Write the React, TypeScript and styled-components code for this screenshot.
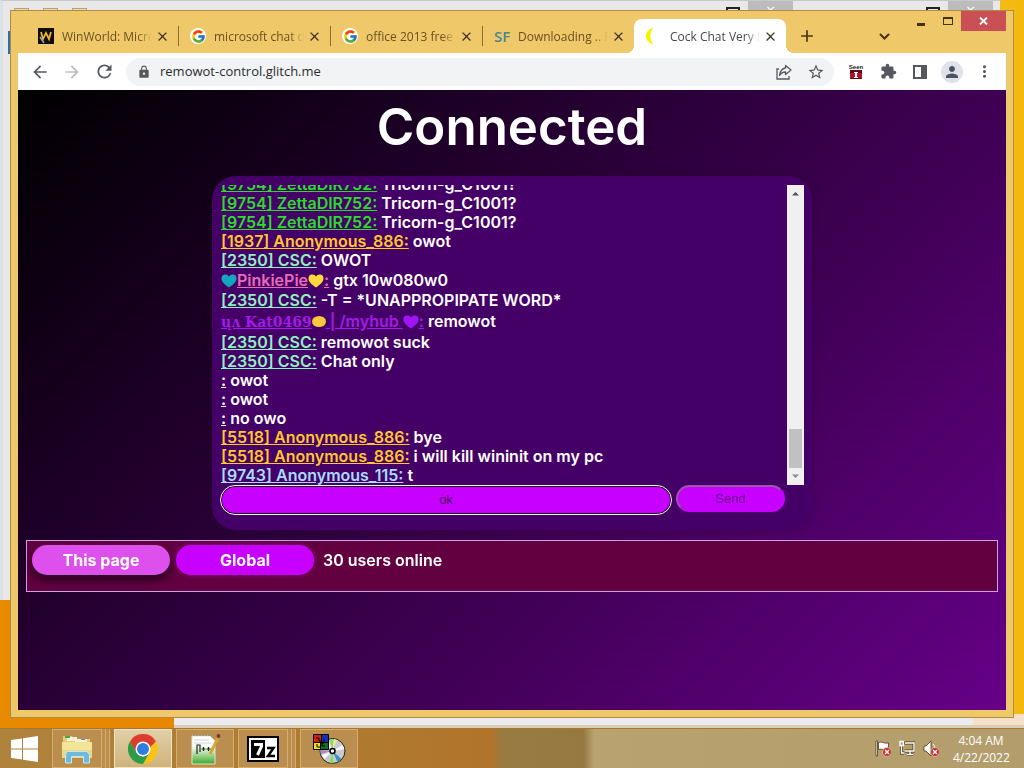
import React from "react";
import styled, { createGlobalStyle, css } from "styled-components";
import {
  MdArrowBack,
  MdArrowForward,
  MdRefresh,
  MdLock,
  MdStarBorder,
  MdExtension,
  MdPerson,
  MdMoreVert,
  MdClose,
  MdAdd,
} from "react-icons/md";
import { FcGoogle } from "react-icons/fc";

const GlobalStyle = createGlobalStyle`
  * { box-sizing: border-box; }
  body { margin: 0; font-family: "Open Sans", "Noto Sans", sans-serif; }
  button { font: inherit; color: inherit; border: 0; padding: 0; background: none; }
`;

const Desktop = styled.div`
  position: relative;
  min-height: 100vh;
  display: flex;
  flex-direction: column;
  overflow: hidden;
  background: linear-gradient(90deg, #e88a00 0, #e58500 40%, #f4bd1c 96%, #f4b90e 100%);
`;

/* Inactive windows that peek out from behind the browser */
const BackWindow = styled.div`
  position: absolute;
  top: 0;
  left: 0;
  right: 24px;
  height: 600px;
  border-top: 1px solid #c9c9c9;
  border-left: 3px solid #dce3e8;
  background: #e9e8e9;
`;
const LowerWindow = styled.div`
  position: absolute;
  left: 174px;
  right: 0;
  bottom: 40px;
  height: 14px;
  border-bottom: 3px solid #d9cdb8;
  background: linear-gradient(90deg, #ebebef 0 94%, #f5e0ca 94%);
`;
const BlueEdge = styled.div`
  position: absolute;
  left: 8px;
  top: 31px;
  width: 3px;
  height: 23px;
  background: #2a70a8;
`;
const BackIcons = styled.div`
  position: absolute;
  top: 8px;
  left: 14px;
  display: flex;
  gap: 14px;
  span {
    width: 15px;
    height: 4px;
    border: 1px solid #b5a27c;
    background: #e9dcae;
  }
`;
const BackControls = styled.div<{ $right: number }>`
  position: absolute;
  top: 1px;
  right: ${(p) => p.$right}px;
  display: flex;
  gap: 8px;
  height: 12px;
  &::before {
    content: "";
    width: 10px;
    height: 8px;
    margin-top: 6px;
    border: 2px solid #222;
  }
`;
const BackClose = styled.span`
  width: 45px;
  padding-top: 3px;
  background: #bcbcbc;
  color: #fff;
  text-align: center;
  line-height: 12px;
`;

const Browser = styled.section`
  position: relative;
  flex: 1;
  display: flex;
  flex-direction: column;
  margin: 10px;
  padding: 0 7px 7px;
  border: 1px solid #ae8c48;
  background: #efc869;
`;
const TitleBar = styled.header`
  display: flex;
  height: 42px;
  padding-left: 8px;
`;
const Tabs = styled.nav`
  display: flex;
  align-items: flex-end;
`;
const Tab = styled.div<{ $active?: boolean; $line?: boolean }>`
  position: relative;
  display: flex;
  align-items: center;
  width: 152px;
  height: 34px;
  padding: 0 8px 0 12px;
  color: #6b4f22;
  font-size: 12px;
  ${(p) =>
    p.$line &&
    css`
      &::after {
        content: "";
        position: absolute;
        right: -1px;
        top: 7px;
        height: 20px;
        border-right: 1px solid #8e7136;
      }
    `}
  ${(p) =>
    p.$active &&
    css`
      color: #45484c;
      background: #fff;
      border-radius: 8px 8px 0 0;
      &::before,
      &::after {
        content: "";
        position: absolute;
        bottom: 0;
        width: 8px;
        height: 8px;
      }
      &::before {
        left: -8px;
        background: radial-gradient(circle at 0 0, transparent 8px, #fff 8px);
      }
      &::after {
        right: -8px;
        background: radial-gradient(circle at 100% 0, transparent 8px, #fff 8px);
      }
    `}
`;
const Favicon = styled.span<{ $round?: boolean }>`
  display: grid;
  place-items: center;
  flex: none;
  width: 16px;
  height: 16px;
  border-radius: ${(p) => (p.$round ? "50%" : "0")};
  background: ${(p) => (p.$round ? "#fff" : "transparent")};
  color: #4b8796;
  font-weight: 600;
  font-size: 15px;
  line-height: 16px;
`;
const TabTitle = styled.span`
  flex: 1;
  margin: 0 2px 0 8px;
  overflow: hidden;
  white-space: nowrap;
  mask-image: linear-gradient(90deg, #000 84%, transparent);
`;
const TabClose = styled.button`
  display: grid;
  place-items: center;
  flex: none;
  width: 16px;
  height: 16px;
  color: #3c3122;
`;
const NewTab = styled.button`
  display: grid;
  place-items: center;
  width: 28px;
  height: 28px;
  margin: 11px 0 0 7px;
  color: #4b3512;
`;
const WindowControls = styled.div`
  display: flex;
  align-items: flex-start;
  margin-left: auto;
`;
const ControlButton = styled.button<{ $kind: "search" | "plain" | "close" }>`
  display: grid;
  place-items: center;
  width: ${(p) => (p.$kind === "close" ? 45 : 27)}px;
  height: 20px;
  ${(p) => p.$kind === "search" && "margin: 15px 9px 0 0;"}
  color: ${(p) => (p.$kind === "close" ? "#fff" : "#4a2f10")};
  background: ${(p) => (p.$kind === "close" ? "#c95156" : "transparent")};
`;

const Toolbar = styled.div`
  display: flex;
  align-items: center;
  height: 37px;
  padding: 0 6px;
  background: #fff;
  color: #55595e;
`;
const ToolButton = styled.button<{ $faint?: boolean }>`
  display: grid;
  place-items: center;
  width: 32px;
  height: 28px;
  opacity: ${(p) => (p.$faint ? 0.4 : 1)};
`;
const Omnibox = styled.div`
  flex: 1;
  display: flex;
  align-items: center;
  height: 28px;
  margin: 0 6px;
  padding: 0 2px 0 11px;
  border-radius: 14px;
  background: #f1f3f4;
`;
const Address = styled.input`
  flex: 1;
  min-width: 0;
  padding: 0 0 2px 9px;
  border: 0;
  outline: 0;
  background: none;
  color: #2b2e31;
  font: 13px/20px "Open Sans", "Noto Sans", sans-serif;
`;
const Avatar = styled.span`
  display: grid;
  place-items: center;
  width: 22px;
  height: 22px;
  border-radius: 50%;
  background: #dfe2e9;
  color: #4c5366;
`;

const Page = styled.main`
  flex: 1;
  padding: 7px 8px 0;
  background: linear-gradient(135deg, #000 0%, #660088 100%);
  color: #fff;
  font-family: Inter, "Open Sans", sans-serif;
  font-weight: 600;
  font-size: 16px;
`;
const Title = styled.h1`
  margin: 0 0 19px;
  font-size: 51px;
  line-height: 60px;
  font-weight: 600;
  text-align: center;
`;
const Card = styled.section`
  max-width: 600px;
  margin: 0 auto 10px;
  padding: 9px 8px 15px;
  border-radius: 24px;
  background: #440066;
  box-shadow: 0 0 10px rgba(40, 0, 40, 0.3);
`;
const Chat = styled.div`
  display: flex;
  height: 300px;
`;
const Messages = styled.div`
  flex: 1;
  display: flex;
  flex-direction: column;
  justify-content: flex-end;
  overflow: hidden;
  padding-left: 1px;
`;
const Message = styled.p<{ $h: number }>`
  flex: none;
  margin: 0;
  height: ${(p) => p.$h}px;
  line-height: ${(p) => p.$h}px;
  white-space: nowrap;
`;
const Nick = styled.a<{ $color: string }>`
  color: ${(p) => p.$color};
  text-decoration: underline;
`;
const Fancy = styled.span`
  font-family: "DejaVu Serif", serif;
  font-weight: 700;
  font-size: 14px;
`;
const Ball = styled.span`
  display: inline-block;
  width: 14px;
  height: 11px;
  border-radius: 50%;
  background: #f8c83c;
`;
const Scrollbar = styled.div`
  display: flex;
  flex-direction: column;
  align-items: center;
  justify-content: space-between;
  width: 17px;
  background: #f0f0f0;
`;
const Thumb = styled.div`
  width: 13px;
  height: 39px;
  margin-top: auto;
  background: #c1c1c1;
`;
const Form = styled.form`
  display: flex;
  align-items: flex-start;
  gap: 4px;
  padding-right: 19px;
`;
const MessageInput = styled.input`
  flex: 1;
  min-width: 0;
  height: 30px;
  padding: 0 2px 2px;
  border: 2px solid #16001c;
  outline: 1px solid #fff;
  outline-offset: -1px;
  border-radius: 15px;
  background: #c800ff;
  color: #4d0a66;
  text-align: center;
  font: 13px "Liberation Sans", Arial, sans-serif;
`;
const SendButton = styled.button`
  width: 109px;
  height: 27px;
  border: 2px solid #c800ff;
  border-top-color: #965aa8;
  border-left-color: #965aa8;
  border-radius: 14px;
  background: #c800ff;
  color: #6a0a8c;
  font: 13px "Liberation Sans", Arial, sans-serif;
`;
const UserBar = styled.section`
  display: flex;
  align-items: flex-start;
  gap: 6px;
  height: 52px;
  padding: 4px 5px;
  border: 1px solid #cba2e6;
  background: #620040;
`;
const ScopeButton = styled.button<{ $on?: boolean }>`
  width: 138px;
  height: 30px;
  border-radius: 15px;
  font-weight: 700;
  background: ${(p) => (p.$on ? "#dd50ee" : "#c800ff")};
  box-shadow: ${(p) => (p.$on ? "0 5px 10px rgba(20, 0, 20, 0.8)" : "0 0 6px rgba(150, 0, 150, 0.6)")};
`;
const Online = styled.span`
  padding-left: 3px;
  line-height: 30px;
`;

const Taskbar = styled.footer`
  position: relative;
  display: flex;
  height: 40px;
  border-top: 1px solid #a87730;
  background: linear-gradient(90deg, #b0833d 0, #ad7c32 30%, #b2742b 48%, #987b42 49%, #967941 57%, #b8a26f 58%, #b39d6c 100%);
`;
const StartButton = styled.button`
  display: grid;
  place-items: center;
  width: 48px;
  margin-right: 4px;
`;
const TaskButton = styled.button<{ $active?: boolean; $stacked?: boolean }>`
  position: relative;
  display: grid;
  place-items: center;
  width: ${(p) => (p.$stacked ? 50 : 58)}px;
  margin-right: ${(p) => (p.$stacked ? 12 : 4)}px;
  border: 1px solid ${(p) => (p.$active ? "#f3e4bf" : "#d9ac69")};
  background: ${(p) => (p.$active ? "linear-gradient(#e0cfa9, #cfb37b)" : "#b98e4e")};
  ${(p) =>
    p.$stacked &&
    css`
      &::after {
        content: "";
        position: absolute;
        top: -1px;
        bottom: -1px;
        right: -9px;
        width: 8px;
        background: repeating-linear-gradient(90deg, #b98e4e 0 3px, #d9ac69 3px 4px);
      }
    `}
`;
const Tray = styled.div`
  display: flex;
  align-items: center;
  gap: 8px;
  margin-left: auto;
  padding-right: 15px;
`;
const Clock = styled.time`
  width: 56px;
  margin-left: 6px;
  color: #fff;
  font-size: 12px;
  line-height: 17px;
  text-align: center;
  white-space: nowrap;
`;

const Heart = ({ color }: { color: string }) => (
  <svg width="16" height="14" viewBox="0 0 16 14" style={{ verticalAlign: -2 }} aria-hidden="true">
    <path fill={color} d="M8 13.500C3 10 .5 7.500.5 4.500A4 4 0 0 1 8 2.500a4 4 0 0 1 7.500 2C15.500 7.500 13 10 8 13.500z" />
  </svg>
);

const WinWorldIcon = () => (
  <svg width="16" height="16" viewBox="0 0 16 16">
    <path fill="#100c08" d="M0 0h16v16H0z" />
    <path d="M3 4l2 7 3-6 3 6 2-7" fill="none" stroke="#e8b62e" strokeWidth="1.800" />
    <path d="M2 9l4 6" stroke="#9aa7b8" strokeWidth="1.500" />
  </svg>
);
const MoonIcon = () => (
  <svg width="16" height="16" viewBox="0 0 16 16">
    <path fill="#f4f400" d="M7.500 0C2.500 1 0 4 0 8s2.500 7 7.500 8C5 13 4.500 11 4.500 8S5 3 7.500 0z" />
  </svg>
);
const ShareIcon = () => (
  <svg width="18" height="18" viewBox="0 0 18 18" fill="none" stroke="currentColor" strokeWidth="1.300">
    <path d="M4 6H2v10h12v-3" />
    <path d="M10.500 2.500L16 7l-5.500 4.500V9C7.500 9 6 10 4.500 12.500 5 8.500 7 5.500 10.500 5z" strokeLinejoin="round" />
  </svg>
);
const SeenIcon = () => (
  <svg width="16" height="18" viewBox="0 0 16 18">
    <path fill="#b3132b" d="M2 8h12v8H2z" />
    <path fill="#5e0a18" d="M2 7h12v3H2zM2 15h12v1H2z" />
    <path fill="#fff" d="M6 9h4v1H9v4h1v1H6v-1h1v-4H6z" />
    <text x="8" y="6" textAnchor="middle" fontFamily="Liberation Sans" fontWeight="700" fontSize="6" fill="#222">Seen</text>
  </svg>
);
const SidePanelIcon = () => (
  <svg width="14" height="14" viewBox="0 0 14 14">
    <path fill="currentColor" fillRule="evenodd" d="M0 0h14v14H0zM2 2v10h6V2z" />
  </svg>
);
const WindowsIcon = () => (
  <svg width="27" height="26" viewBox="0 0 27 26" fill="#fff">
    <path d="M0 4l11-1.600V12.400H0zM12 2.200L27 0v12.400H12zM0 13.400h11v10L0 22zM12 13.400h15V26l-15-2.300z" />
  </svg>
);
const ExplorerIcon = () => (
  <svg width="32" height="30" viewBox="0 0 32 30">
    <path fill="#e6cc72" d="M2 2h9l2 3h16v19H2z" />
    <path fill="#f5f0d6" d="M6 3h10v4H6zM14 5h12v4H14z" />
    <path fill="#47a447" d="M4 2h5v2H4z" />
    <path fill="#5a8fd0" d="M20 5h4v1h-4z" />
    <path fill="#f4e49a" d="M1 8h30v16H1z" />
    <path fill="#edd77f" d="M1 16h30v8H1z" />
    <path fill="#6fb9dd" stroke="#c4e8f5" d="M6 17.500h20l2.500 3V29h-6v-6.500h-12V29h-6v-8.500z" />
  </svg>
);
const ChromeIcon = () => (
  <svg width="30" height="30" viewBox="0 0 30 30">
    <circle cx="15" cy="15" r="15" fill="#fbc116" />
    <path fill="#dc3d31" d="M2 7.500A15 15 0 0 1 28 7.500L15 8.500 8.500 18.800z" />
    <path fill="#dc3d31" d="M15 7.500h13L20 15z" />
    <path fill="#2c9c4b" d="M2 7.500A15 15 0 0 0 15 30l6.500-11.200L15 22.500 8.500 18.800z" />
    <circle cx="15" cy="15" r="7.500" fill="#fff" />
    <circle cx="15" cy="15" r="6" fill="#2f7de1" />
  </svg>
);
const NotepadIcon = () => (
  <svg width="32" height="32" viewBox="0 0 32 32">
    <defs>
      <linearGradient id="leaf" x1="0" y1="0" x2="0" y2="1">
        <stop offset=".35" stopColor="#fff" />
        <stop offset="1" stopColor="#3fa92a" />
      </linearGradient>
    </defs>
    <path fill="url(#leaf)" stroke="#d9e8d0" d="M3 3h18l5 5v23H3z" />
    <path stroke="#8a9a8a" strokeDasharray="2 1" d="M4 2.500h17" />
    <path stroke="#c6d6dc" d="M5 7h15M5 10h17" />
    <path stroke="#d9a336" strokeWidth="3" d="M21 21L29 5" />
    <path fill="none" stroke="#1d2a1a" strokeWidth="1.200" d="M8 21v-9h3v7M12.500 16h4m-2-2v4M17.500 16h4m-2-2v4" />
    <circle cx="29.500" cy="3" r="2" fill="#7a3b34" />
  </svg>
);
const SevenZipIcon = () => (
  <svg width="32" height="26" viewBox="0 0 32 26">
    <path fill="#000" d="M0 0h32v26H0z" />
    <path fill="#fff" d="M2 2h28v22H2z" />
    <path fill="#000" d="M4 4h14v18H4z" />
    <path fill="none" stroke="#fff" strokeWidth="3" d="M7 8.500h7.500v2L10.500 19" />
    <path fill="none" stroke="#000" strokeWidth="2.500" d="M20 12h6.500L21 20h7" />
  </svg>
);
const DiscIcon = () => (
  <svg width="34" height="32" viewBox="0 0 34 32">
    <circle cx="20.500" cy="18" r="12.500" fill="#c9c9cf" stroke="#222" />
    <path fill="#fff" d="M20.500 18L12 9.500l4-3zM20.500 18l10-6 2 4zM20.500 18l-8 8-3-4z" />
    <path fill="#7be35b" d="M20.500 18L18 6h3zM20.500 18l-3 12 4 .3z" />
    <path fill="#3a8fc8" d="M20.500 18l5 11 4-3z" />
    <path fill="#a68bc4" d="M20.500 18L8.500 17v4z" />
    <path fill="#e8ef7c" d="M20.500 18L22 6l3 1z" />
    <path fill="#d51f14" stroke="#000" d="M1.500 1.500h8v8h-8z" />
    <path fill="#1431b8" stroke="#000" d="M9.500 1.500h7v8h-7z" />
    <path fill="#f2e21d" stroke="#000" d="M1.500 9.500h7v7h-7z" />
    <path fill="#126f25" stroke="#000" d="M8.500 9.500h8v7h-8z" />
    <path stroke="#000" fill="none" d="M4 5h3v3h3M5 11v3h3M12 6v4h-2v3h3" />
    <circle cx="20.500" cy="18" r="2.500" fill="#fff" stroke="#000" strokeWidth="1.500" />
  </svg>
);
const RedCross = () => (
  <>
    <circle cx="12" cy="12" r="4.500" fill="#c9312f" stroke="#f1c9b8" strokeWidth=".7" />
    <path stroke="#fff" strokeWidth="1.400" d="M10 10l4 4m0-4l-4 4" />
  </>
);
const FlagIcon = () => (
  <svg width="16" height="17" viewBox="0 0 16 17">
    <path fill="#fff" stroke="#4e3d1f" strokeWidth=".8" d="M1 1h1.500v15H1zM3.500 2.500c4-1.500 5 1.500 10 .5v7c-5 1-6-2-10-.5z" />
    <RedCross />
  </svg>
);
const NetworkIcon = () => (
  <svg width="16" height="17" viewBox="0 0 16 17" fill="none">
    <path stroke="#4e3d1f" strokeWidth="3" d="M5 3h10v8H6M8 14.500h6M11 11v3M2.500 6v7H5" />
    <path stroke="#fff" strokeWidth="1.400" d="M6 3h9v8H6M8 14.500h6M11 11v3M2.500 6v7H5M1 1.500h3.500v4H1z" />
  </svg>
);
const SoundIcon = () => (
  <svg width="16" height="17" viewBox="0 0 16 17">
    <path fill="#fff" stroke="#4e3d1f" strokeWidth=".8" d="M1 6h2l5-5v15l-5-5H1z" />
    <path fill="none" stroke="#fff" d="M10 4c1.500 1.500 2 3 2 5" />
    <RedCross />
  </svg>
);

const tabs = [
  { title: "WinWorld: Micro", icon: <WinWorldIcon /> },
  { title: "microsoft chat d", icon: <FcGoogle size={15} />, round: true },
  { title: "office 2013 free", icon: <FcGoogle size={15} />, round: true },
  { title: "Downloading .. F", icon: "SF" },
  { title: "Cock Chat Very B", icon: <MoonIcon />, active: true },
];

const zetta = { nick: "[9754] ZettaDIR752:", color: "#2bdc2b", text: "Tricorn-g_C1001?" };
const csc = { nick: "[2350] CSC:", color: "#8ff0c0" };
const anon = { nick: "[5518] Anonymous_886:", color: "#ffc62e" };

const messages: { nick: React.ReactNode; color: string; text: string; height?: number }[] = [
  zetta,
  zetta,
  zetta,
  { ...anon, nick: "[1937] Anonymous_886:", text: "owot" },
  { ...csc, text: "OWOT" },
  {
    nick: (
      <>
        <Heart color="#14a5c0" />
        PinkiePie
        <Heart color="#ffd83c" />:
      </>
    ),
    color: "#e86cb8",
    text: "gtx 10w080w0",
    height: 21,
  },
  { ...csc, text: "-T = *UNAPPROPIPATE WORD*" },
  {
    nick: (
      <>
        <Fancy>ųʌ Kat0469</Fancy>
        <Ball /> | /myhub <Heart color="#a214f5" />:
      </>
    ),
    color: "#a41ae8",
    text: "remowot",
    height: 23,
  },
  { ...csc, text: "remowot suck" },
  { ...csc, text: "Chat only" },
  { nick: ":", color: "#fff", text: "owot" },
  { nick: ":", color: "#fff", text: "owot" },
  { nick: ":", color: "#fff", text: "no owo" },
  { ...anon, text: "bye" },
  { ...anon, text: "i will kill wininit on my pc" },
  { nick: "[9743] Anonymous_115:", color: "#a5dcff", text: "t" },
];

export default function App() {
  const moveCaretToEnd = (e: React.FocusEvent<HTMLInputElement>) => {
    const end = e.target.value.length;
    e.target.setSelectionRange(end, end);
  };

  return (
    <>
      <GlobalStyle />
      <Desktop>
        <BackWindow />
        <LowerWindow />
        <BlueEdge />
        <BackIcons>
          <span />
          <span />
          <span />
        </BackIcons>
        <BackControls $right={231}>
          <BackClose>×</BackClose>
        </BackControls>
        <BackControls $right={31}>
          <BackClose>×</BackClose>
        </BackControls>

        <Browser>
          <TitleBar>
            <Tabs>
              {tabs.map((t, i) => (
                <Tab key={t.title} $active={t.active} $line={i < 3}>
                  <Favicon $round={t.round}>{t.icon}</Favicon>
                  <TabTitle>{t.title}</TabTitle>
                  <TabClose aria-label="Close tab">
                    <MdClose size={15} />
                  </TabClose>
                </Tab>
              ))}
            </Tabs>
            <NewTab aria-label="New tab">
              <MdAdd size={20} />
            </NewTab>
            <WindowControls>
              <ControlButton $kind="search" aria-label="Search tabs">
                <svg width="11" height="7" viewBox="0 0 11 7" fill="none" stroke="currentColor" strokeWidth="2">
                  <path d="M1 1l4.500 4.500L10 1" />
                </svg>
              </ControlButton>
              <ControlButton $kind="plain" aria-label="Minimize">
                <svg width="8" height="12" viewBox="0 0 8 12">
                  <path fill="currentColor" d="M0 8h8v3H0z" />
                </svg>
              </ControlButton>
              <ControlButton $kind="plain" aria-label="Maximize">
                <svg width="10" height="8" viewBox="0 0 10 8">
                  <path fill="currentColor" fillRule="evenodd" d="M0 0h10v8H0zM1 2v5h8V2z" />
                </svg>
              </ControlButton>
              <ControlButton $kind="close" aria-label="Close">
                <svg width="9" height="8" viewBox="0 0 9 8" stroke="currentColor" strokeWidth="1.800">
                  <path d="M1 .5l7 7m0-7l-7 7" />
                </svg>
              </ControlButton>
            </WindowControls>
          </TitleBar>
          <Toolbar>
            <ToolButton aria-label="Back">
              <MdArrowBack size={20} />
            </ToolButton>
            <ToolButton $faint aria-label="Forward">
              <MdArrowForward size={20} />
            </ToolButton>
            <ToolButton aria-label="Reload">
              <MdRefresh size={21} />
            </ToolButton>
            <Omnibox>
              <MdLock size={14} />
              <Address aria-label="Address" defaultValue="remowot-control.glitch.me" />
              <ToolButton aria-label="Share">
                <ShareIcon />
              </ToolButton>
              <ToolButton aria-label="Bookmark">
                <MdStarBorder size={18} />
              </ToolButton>
            </Omnibox>
            <ToolButton aria-label="Seen">
              <SeenIcon />
            </ToolButton>
            <ToolButton aria-label="Extensions">
              <MdExtension size={17} />
            </ToolButton>
            <ToolButton aria-label="Side panel">
              <SidePanelIcon />
            </ToolButton>
            <ToolButton aria-label="Profile">
              <Avatar>
                <MdPerson size={18} />
              </Avatar>
            </ToolButton>
            <ToolButton aria-label="Menu">
              <MdMoreVert size={19} />
            </ToolButton>
          </Toolbar>

          <Page>
            <Title>Connected</Title>
            <Card>
              <Chat>
                <Messages>
                  {messages.map((m, i) => (
                    <Message key={i} $h={m.height ?? 19}>
                      <Nick href="#" $color={m.color}>
                        {m.nick}
                      </Nick>{" "}
                      {m.text}
                    </Message>
                  ))}
                </Messages>
                <Scrollbar>
                  <svg width="17" height="17" viewBox="0 0 17 17">
                    <path fill="#505050" d="M5 10.500L8.500 7l3.500 3.500z" />
                  </svg>
                  <Thumb />
                  <svg width="17" height="17" viewBox="0 0 17 17">
                    <path fill="#8a8a8a" d="M5 6.500h7L8.500 10z" />
                  </svg>
                </Scrollbar>
              </Chat>
              <Form onSubmit={(e) => e.preventDefault()}>
                <MessageInput aria-label="Message" defaultValue="ok" autoFocus onFocus={moveCaretToEnd} />
                <SendButton>Send</SendButton>
              </Form>
            </Card>
            <UserBar>
              <ScopeButton $on>This page</ScopeButton>
              <ScopeButton>Global</ScopeButton>
              <Online>30 users online</Online>
            </UserBar>
          </Page>
        </Browser>

        <Taskbar>
          <StartButton aria-label="Start">
            <WindowsIcon />
          </StartButton>
          <TaskButton $stacked aria-label="File Explorer">
            <ExplorerIcon />
          </TaskButton>
          <TaskButton $active aria-label="Chrome">
            <ChromeIcon />
          </TaskButton>
          <TaskButton aria-label="Notepad++">
            <NotepadIcon />
          </TaskButton>
          <TaskButton $stacked aria-label="7-Zip">
            <SevenZipIcon />
          </TaskButton>
          <TaskButton aria-label="Disc tool">
            <DiscIcon />
          </TaskButton>
          <Tray>
            <FlagIcon />
            <NetworkIcon />
            <SoundIcon />
            <Clock>
              4:04 AM
              <br />
              4/22/2022
            </Clock>
          </Tray>
        </Taskbar>
      </Desktop>
    </>
  );
}
